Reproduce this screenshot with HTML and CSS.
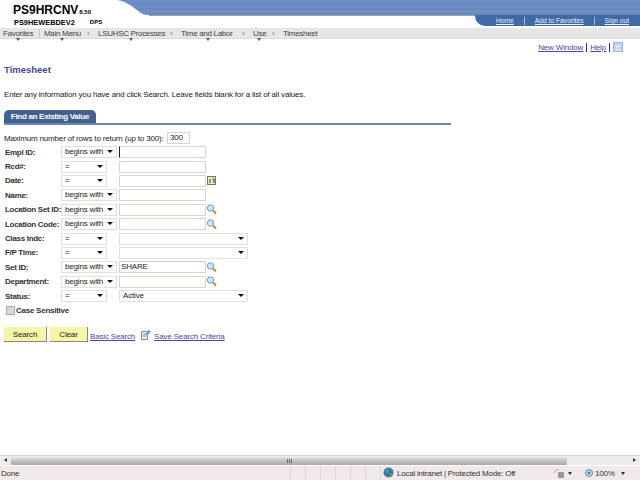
FILE: index.html
```html
<!DOCTYPE html>
<html lang="en">
<head>
<meta charset="utf-8">
<title>Timesheet</title>
<link rel="stylesheet" href="styles.css">
</head>
<body>
<div class="page">
  <header class="banner">
    <div class="brand">
      <div class="brand-main">PS9HRCNV<span class="brand-ver">8.50</span></div>
      <div class="brand-sub"><span>PS9HEWEBDEV2</span><span class="brand-dps">DPS</span></div>
    </div>
    <div class="banner-art">
      <svg class="banner-curve" width="32" height="17" viewBox="0 0 32 17"><path d="M0 0C8 1 15 6 20 10C23 13 27 15 32 15V17H0Z" fill="#fff"/></svg>
      <div class="unav">
        <a href="#">Home</a><i></i><a href="#">Add to Favorites</a><i></i><a href="#">Sign out</a>
      </div>
    </div>
  </header>
  <nav class="crumbs">
    <span class="crumb c1">Favorites</span><span class="pipe"></span>
    <span class="crumb c2">Main Menu</span><span class="sep">›</span>
    <span class="crumb c3">LSUHSC Processes</span><span class="sep">›</span>
    <span class="crumb c4">Time and Labor</span><span class="sep">›</span>
    <span class="crumb c5">Use</span><span class="sep">›</span>
    <span class="crumb c6">Timesheet</span>
  </nav>
  <main class="content">
    <div class="pagelinks">
      <a href="#">New Window</a><i></i><a href="#">Help</a><i></i>
      <svg class="customize" width="10" height="10" viewBox="0 0 10 10"><rect x=".5" y=".5" width="9" height="9" fill="#bcd0ee" stroke="#9db4dc"/><path d="M2 4h6M4 4v4M2 8h6" stroke="#eef3fb" fill="none"/></svg>
    </div>
    <h1 class="title">Timesheet</h1>
    <p class="instr">Enter any information you have and click Search. Leave fields blank for a list of all values.</p>
    <div class="tabbar"><span class="tab">Find an Existing Value</span></div>
    <div class="maxrow"><label>Maximum number of rows to return (up to 300):</label><span class="field maxfield">300</span></div>
    <div class="grid">
      <label>Empl ID:</label><span class="select sel-b">begins with</span><span class="field f-caret"></span><span></span>
      <label>Rcd#:</label><span class="select sel-e">=</span><span class="field"></span><span></span>
      <label>Date:</label><span class="select sel-e">=</span><span class="field"></span>
      <svg class="ico cal" width="9" height="9" viewBox="0 0 9 9"><rect x=".5" y=".5" width="8" height="8" fill="#efe9c4" stroke="#7b7a4c"/><path d="M3 3v4M5.500 3h1.500v4" stroke="#333" fill="none"/></svg>
      <label>Name:</label><span class="select sel-b">begins with</span><span class="field"></span><span></span>
      <label>Location Set ID:</label><span class="select sel-b">begins with</span><span class="field"></span>
      <svg class="ico" width="11" height="11" viewBox="0 0 11 11"><use href="#lens"/></svg>
      <label>Location Code:</label><span class="select sel-b">begins with</span><span class="field"></span>
      <svg class="ico" width="11" height="11" viewBox="0 0 11 11"><use href="#lens"/></svg>
      <label>Class Indc:</label><span class="select sel-e">=</span><span class="select sel-w"></span>
      <label>F/P Time:</label><span class="select sel-e">=</span><span class="select sel-w"></span>
      <label>Set ID:</label><span class="select sel-b">begins with</span><span class="field">SHARE</span>
      <svg class="ico" width="11" height="11" viewBox="0 0 11 11"><use href="#lens"/></svg>
      <label>Department:</label><span class="select sel-b">begins with</span><span class="field"></span>
      <svg class="ico" width="11" height="11" viewBox="0 0 11 11"><use href="#lens"/></svg>
      <label>Status:</label><span class="select sel-e">=</span><span class="select sel-w">Active</span>
    </div>
    <div class="case"><span class="check"></span><label>Case Sensitive</label></div>
    <div class="actions">
      <button class="btn btn-s" type="button">Search</button>
      <button class="btn btn-c" type="button">Clear</button>
      <a class="basic" href="#">Basic Search</a>
      <svg class="saveico" width="11" height="12" viewBox="0 0 11 12"><path d="M1.500 2.500h6v8h-6z" fill="#e9eef2" stroke="#7d8c99"/><path d="M3 5h3M3 7h3" stroke="#7d8c99"/><path d="M6 5l3-4 1.500 1.500-3.500 4z" fill="#3f8fd6"/></svg>
      <a class="save" href="#">Save Search Criteria</a>
    </div>
  </main>
  <div class="hscroll">
    <span class="sb-btn sb-left"></span>
    <span class="sb-thumb"><span class="grip"></span></span>
    <span class="sb-btn sb-right"></span>
  </div>
  <footer class="status">
    <span class="st-done">Done</span>
    <span class="st-cell"></span><span class="st-cell"></span><span class="st-cell"></span><span class="st-cell"></span><span class="st-cell"></span><span class="st-cell"></span>
    <span class="st-zone">
      <svg width="12" height="12" viewBox="0 0 12 12"><circle cx="5.500" cy="5.500" r="5" fill="#3b78b5"/><path d="M3 2l3 1-1 3-2-1zM7 6l3 1-1 3-2-1z" fill="#5aa84a"/></svg>
      Local intranet | Protected Mode: Off
    </span>
    <span class="st-sec">
      <svg width="13" height="11" viewBox="0 0 13 11"><path d="M1 5a4 4 0 0 1 5-3" fill="none" stroke="#a9a9a9"/><rect x="5" y="4" width="6" height="6" fill="#9a9a9a"/></svg>
      <b class="arrow"></b>
    </span>
    <span class="st-zoom">
      <svg width="9" height="9" viewBox="0 0 9 9"><circle cx="4" cy="4" r="3.500" fill="#cfe0f2" stroke="#5b87b5"/><path d="M2.500 4h3M4 2.500v3" stroke="#22558c"/></svg>
      100%
      <b class="arrow zoom-arrow"></b>
    </span>
  </footer>
</div>
<svg class="defs" width="0" height="0"><defs><g id="lens"><circle cx="4.500" cy="4" r="3.200" fill="#cfe3f4" stroke="#6f9fc8"/><path d="M7 6.500l3 3" stroke="#b58a52" stroke-width="2"/></g></defs></svg>
</body>
</html>
```
FILE: styles.css
```css
html, body { margin: 0; padding: 0; width: 640px; height: 480px; overflow: hidden; background: #fff; }
body, label, button { font-family: "Liberation Sans", Arial, sans-serif; }
.page { width: 640px; height: 480px; display: flex; flex-direction: column; color: #222; font-size: 8px; letter-spacing: -.17px; }
a { color: #4f45a8; }
i { display: inline-block; }

.banner { height: 28px; display: flex; flex: none; letter-spacing: 0; }
.brand { width: 117px; padding-left: 13px; box-sizing: border-box; flex: none; color: #000; }
.brand-main { font-size: 12px; font-weight: bold; line-height: 12px; padding-top: 4px; white-space: nowrap; }
.brand-ver { font-size: 6px; margin-left: 1px; }
.brand-sub { font-size: 7.400px; font-weight: bold; line-height: 9px; padding-left: 1px; display: flex; white-space: nowrap; }
.brand-dps { font-size: 6px; margin-left: 15px; }
.banner-art { flex: 1; height: 28px; position: relative; background: linear-gradient(#fff 15px, #8c8a9a 15px, #b6b4bc 16px, #fff 16px); }
.banner-art::before { content: ""; position: absolute; left: 0; right: 0; top: 0; height: 15px; background: repeating-linear-gradient(#6e8fc3 0, #6e8fc3 3px, #648abf 3px, #648abf 5px); }
.banner-curve { position: absolute; left: 0; top: 0; }
.unav { position: absolute; right: 0; top: 15px; width: 165px; height: 11px; box-sizing: border-box; background: #3f6aa6; border-bottom-left-radius: 10px; display: flex; align-items: center; padding-left: 21px; font-size: 6.700px; }
.unav a { color: #eaf0f8; white-space: nowrap; }
.unav i { width: 1px; height: 8px; background: #a7bad6; margin: 0 10px; }

.crumbs { height: 11px; box-sizing: border-box; flex: none; background: #e6e6e6; border-bottom: 1px solid #dcdcdc; display: flex; align-items: center; font-size: 8px; letter-spacing: -.3px; color: #444; padding-left: 3px; white-space: nowrap; }
.crumb { position: relative; flex: none; }
.crumb::after { content: ""; position: absolute; left: 50%; bottom: -3px; border: 2.500px solid transparent; border-top: 3px solid #2f62a8; border-bottom: 0; margin-left: -2px; }
.c1 { width: 30px; }
.c2 { width: 36px; }
.c3 { width: 65px; }
.c4 { width: 54px; }
.c5 { width: 12px; }
.c6::after { display: none; }
.pipe { width: 1px; height: 9px; background: #c6c6c6; margin: 0 4px 0 6px; flex: none; }
.sep { width: 18px; box-sizing: border-box; padding-left: 7px; color: #777; flex: none; }

.content { flex: 1; min-height: 0; padding: 0 0 0 4px; }
.pagelinks { display: flex; justify-content: flex-end; align-items: center; height: 14px; padding: 1px 17px 0 0; font-size: 8px; }
.pagelinks i { width: 1px; height: 9px; background: #4a2a70; margin: 0 3px; }
.title { margin: 10px 0 0; font-size: 9.500px; line-height: 12px; color: #3f4a8c; font-weight: bold; letter-spacing: 0; }
.instr { margin: 13px 0 0; line-height: 11px; color: #222; }
.tabbar { margin: 10px 0 0 0; width: 447px; height: 13px; border-bottom: 2px solid #6b86ae; }
.tab { display: block; height: 13px; width: 92px; box-sizing: border-box; background: #41628f; color: #fff; font-weight: bold; font-size: 8px; letter-spacing: -.3px; line-height: 14px; text-align: center; border-radius: 5px 5px 0 0; }
.maxrow { display: flex; align-items: center; margin-top: 7px; height: 12px; }
.maxrow label { width: 163px; flex: none; }
.field { height: 12px; box-sizing: border-box; border: 1px solid #d8d4cc; background: #fff; line-height: 10px; padding-left: 1px; display: block; }
.maxfield { width: 23px; padding-left: 2px; }
.grid { display: grid; grid-template-columns: 56px 58px 87px 1fr; grid-auto-rows: 14.400px; margin: 1px 0 0 1px; width: 244px; align-items: center; }
.grid > label { font-weight: bold; font-size: 8px; letter-spacing: -.3px; white-space: nowrap; color: #333; }
.select { height: 12px; box-sizing: border-box; border: 1px solid #e2e0da; background: #fff; line-height: 10px; padding-left: 3px; position: relative; display: block; }
.select::after { content: ""; position: absolute; right: 3px; top: 3px; border: 3px solid transparent; border-top: 3px solid #111; border-bottom: 0; }
.sel-b { width: 56px; }
.sel-e { width: 46px; }
.sel-w { grid-column: 3 / 5; width: 129px; }
.grid > .field { width: 87px; }
.f-caret { border-left: 1px solid #222; }
.cal { margin-left: 1px; }
.case { display: flex; align-items: center; margin: 1px 0 0 2px; height: 13px; gap: 1px; font-weight: bold; letter-spacing: -.25px; color: #333; }
.check { width: 7px; height: 7px; background: #d8d8d8; border: 1px solid #aaa; }
.actions { display: flex; align-items: center; margin-top: 10px; height: 15px; }
.btn { height: 15px; border: 0; border-right: 1px solid #8a8a70; border-bottom: 1px solid #8a8a70; background: #f7f5a8; font-size: 8px; letter-spacing: -.17px; color: #222; padding: 0; flex: none; }
.btn-s { width: 43px; margin-right: 3px; }
.btn-c { width: 38px; margin-right: 2px; }
.basic, .save { padding-top: 4px; }
.saveico { margin: 0 3px 0 5px; }

.hscroll { height: 10px; box-sizing: border-box; flex: none; margin-bottom: 1px; background: #ececec; display: flex; align-items: center; border-top: 1px solid #d0d0d0; }
.sb-btn { width: 11px; height: 9px; position: relative; flex: none; }
.sb-left::after { content: ""; position: absolute; left: 4px; top: 2px; border: 2.500px solid transparent; border-right: 3px solid #333; border-left: 0; }
.sb-right::after { content: ""; position: absolute; right: 4px; top: 2px; border: 2.500px solid transparent; border-left: 3px solid #333; border-right: 0; }
.sb-thumb { width: 556px; height: 9px; background: linear-gradient(#f2f2f2, #c8c8c8 45%, #a9a9a9); display: flex; justify-content: center; align-items: center; border-radius: 1px; flex: none; }
.grip { width: 5px; height: 4px; background: repeating-linear-gradient(90deg, #666 0 1px, transparent 1px 2px); }
.sb-right { margin-left: auto; }

.status { height: 14px; flex: none; background: #f1e9e9; display: flex; align-items: center; font-size: 8px; letter-spacing: -.22px; color: #333; white-space: nowrap; }
.st-done { width: 290px; padding-left: 1px; box-sizing: border-box; flex: none; }
.st-cell { width: 15px; height: 14px; border-left: 1px solid #dcd6d6; box-sizing: border-box; flex: none; }
.st-zone { width: 171px; flex: none; display: flex; align-items: center; gap: 2px; box-sizing: border-box; padding-left: 2px; border-left: 1px solid #dcd6d6; height: 14px; }
.st-sec { width: 33px; flex: none; display: flex; align-items: center; padding-left: 2px; box-sizing: border-box; height: 14px; }
.st-zoom { display: flex; align-items: center; gap: 1px; padding-left: 1px; height: 14px; }
.arrow { display: block; border: 2.500px solid transparent; border-top: 3px solid #333; border-bottom: 0; margin-left: 2px; }
.zoom-arrow { margin-left: 5px; }
.defs { position: absolute; }
```
